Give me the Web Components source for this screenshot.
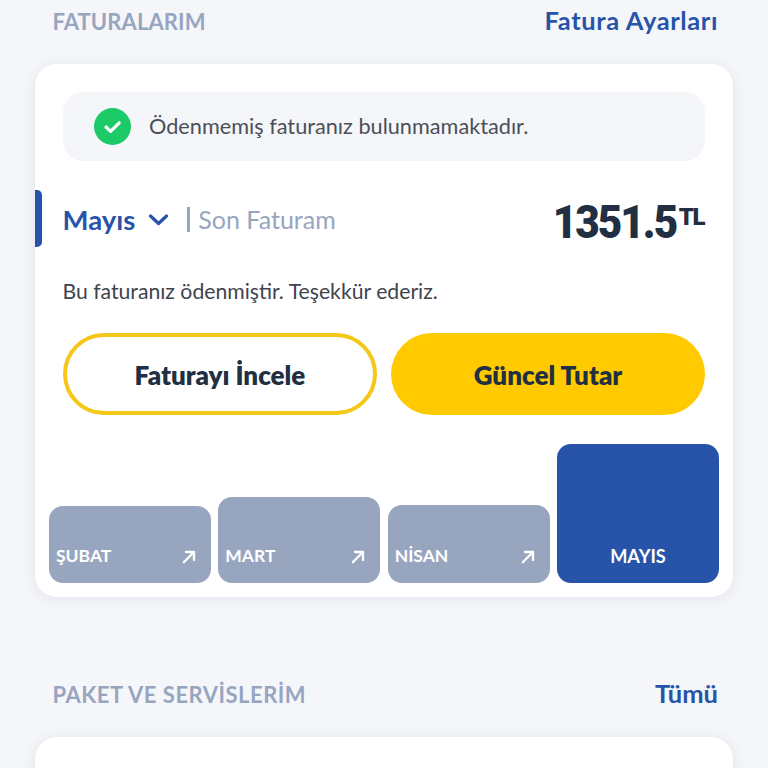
<!DOCTYPE html>
<html lang="tr"><head><meta charset="utf-8"><title>Faturalarım</title>
<style>
html,body{margin:0;padding:0;height:768px;overflow:hidden;background:#f5f6f9;font-family:Lato,"Noto Sans",sans-serif}
</style></head><body>
<app-page>
  <section-head label="FATURALARIM" action="Fatura Ayarları" style="--a-ls:.6px;--l-ls:.1px"></section-head>
  <app-card style="--card-h:533px">
    <notice-box>Ödenmemiş faturanız bulunmamaktadır.</notice-box>
    <bill-summary month="Mayıs" sub="Son Faturam" amount="1351.5" unit="TL"></bill-summary>
    <p-note>Bu faturanız ödenmiştir. Teşekkür ederiz.</p-note>
    <action-row>
      <pill-btn kind="outline">Faturayı İncele</pill-btn>
      <pill-btn kind="solid">Güncel Tutar</pill-btn>
    </action-row>
    <bar-chart>
      <bar-item h="77" label="ŞUBAT" arrow></bar-item>
      <bar-item h="86" label="MART" arrow></bar-item>
      <bar-item h="78" label="NİSAN" arrow></bar-item>
      <bar-item h="139" label="MAYIS" active></bar-item>
    </bar-chart>
  </app-card>
  <section-head label="PAKET VE SERVİSLERİM" action="Tümü" class="second" style="--l-ls:.5px"></section-head>
  <app-card style="--card-h:200px"></app-card>
</app-page>
<script>
function def(name, css, html){
  customElements.define(name, class extends HTMLElement{
    connectedCallback(){
      if(this.shadowRoot) return;
      const r=this.attachShadow({mode:'open'});
      const a=n=>this.getAttribute(n)||'';
      r.innerHTML='<style>'+css+'</style>'+(typeof html==='function'?html(a,this):html);
    }
  });
}
const arrow='<svg width="14" height="14" viewBox="0 0 14 14" fill="none" stroke="#fff" stroke-width="2.3" stroke-linecap="round" stroke-linejoin="round"><path d="M1.8 12.2 12 2M4 2H12v8"/></svg>';
def('app-page',':host{display:flex;flex-direction:column;padding:0 35px;height:768px;box-sizing:border-box;overflow:hidden}::slotted(section-head.second){margin-top:76px}','<slot></slot>');
def('section-head',`:host{display:flex;justify-content:space-between;align-items:center;height:44px;padding:0 15px 0 17.5px;margin-bottom:20px;flex:none}
.l{font:700 22px/44px Lato,sans-serif;color:#98a5bf;letter-spacing:var(--l-ls,0)}
.a{font:700 25.5px/40px Lato,sans-serif;color:#2754a8;letter-spacing:var(--a-ls,0);padding-bottom:4px}`,
(a)=>`<span class="l">${a('label')}</span><span class="a">${a('action')}</span>`);
def('app-card',`:host{display:flex;flex-direction:column;flex:none;height:var(--card-h);background:#fff;border-radius:22px;box-shadow:0 2px 14px rgba(40,60,100,.09);position:relative;box-sizing:border-box;padding:28px 28px 14px}`,'<slot></slot>');
def('notice-box',`:host{display:flex;align-items:center;gap:18px;height:69px;background:#f5f6f9;border-radius:20px;padding:0 0 0 31px;font:400 21.7px/1 Lato,sans-serif;color:#4a4f58;flex:none}
svg{flex:none}`,`<svg width="37" height="37" viewBox="0 0 37 37"><circle cx="18.5" cy="18.5" r="18.5" fill="#1ccb67"/><path d="M12 19l4.6 4.4 8.6-8.6" fill="none" stroke="#fff" stroke-width="3.2" stroke-linecap="round" stroke-linejoin="round"/></svg><span><slot></slot></span>`);
def('bill-summary',`:host{display:flex;align-items:center;justify-content:space-between;height:57px;margin-top:29px;flex:none;position:relative}
.bar{position:absolute;left:-28px;top:0;width:7px;height:57px;background:#2754a8;border-radius:0 5px 5px 0}
.left{display:flex;align-items:center;padding-top:2px}
.m{font:700 27.5px/1 Lato,sans-serif;color:#2754a8;margin-left:-.5px}
svg{margin:0 0 0 13px}
.sep{width:3px;height:25px;background:#98a5bf;margin:0 8px 0 18px}
.s{font:400 25px/1 Lato,sans-serif;color:#98a5bf}
.amt{display:flex;align-items:flex-start;color:#222f42;font-family:Roboto,sans-serif;font-weight:900;padding-top:6px;margin-right:1px}
.n{font-size:47px;line-height:47px;letter-spacing:-2.2px;display:inline-block;transform:scaleX(.9);transform-origin:right center}
.u{font-size:24px;line-height:24px;margin-top:6.5px;letter-spacing:-1.5px;margin-left:3px}`,
(a)=>`<div class="bar"></div><div class="left"><span class="m">${a('month')}</span><svg width="21" height="12" viewBox="0 0 21 12" fill="none" stroke="#2754a8" stroke-width="3.2" stroke-linecap="round" stroke-linejoin="round"><path d="M2.5 2 10.5 9.5 18.5 2"/></svg><span class="sep"></span><span class="s">${a('sub')}</span></div><div class="amt"><span class="n">${a('amount')}</span><span class="u">${a('unit')}</span></div>`);
def('p-note',`:host{display:block;margin-top:32px;font:400 21.2px/24px Lato,sans-serif;color:#3f444d;flex:none;margin-left:-.5px}`,'<slot></slot>');
def('action-row',`:host{display:grid;grid-template-columns:1fr 1fr;gap:14px;margin-top:30px;flex:none}`,'<slot></slot>');
def('pill-btn',`:host{display:flex;align-items:center;justify-content:center;height:82px;box-sizing:border-box;border-radius:41px;font:800 26px/1 Lato,sans-serif;color:#222f42;padding-top:1px}
:host([kind=outline]){background:#fff;border:4px solid #f5c71a}
:host([kind=solid]){background:#ffcb00}`,'<slot></slot>');
def('bar-chart',`:host{display:grid;grid-template-columns:repeat(4,162px);align-items:end;margin:auto -14px 0;flex:none;justify-content:space-between}`,'<slot></slot>');
def('bar-item',`:host{display:flex;align-items:flex-end;justify-content:space-between;box-sizing:border-box;background:#98a5bf;border-radius:14px;color:#fff;padding:0 15px 17px 7px;font:700 17.5px/20px Lato,sans-serif}
:host([active]){background:#2754a8;justify-content:center;padding:0 0 17px;font-size:18.2px}
svg{display:block;margin-bottom:2px}`,
(a,el)=>{el.style.height=a('h')+'px';return `<span>${a('label')}</span>${el.hasAttribute('arrow')?arrow:''}`});
</script>
</body></html>
